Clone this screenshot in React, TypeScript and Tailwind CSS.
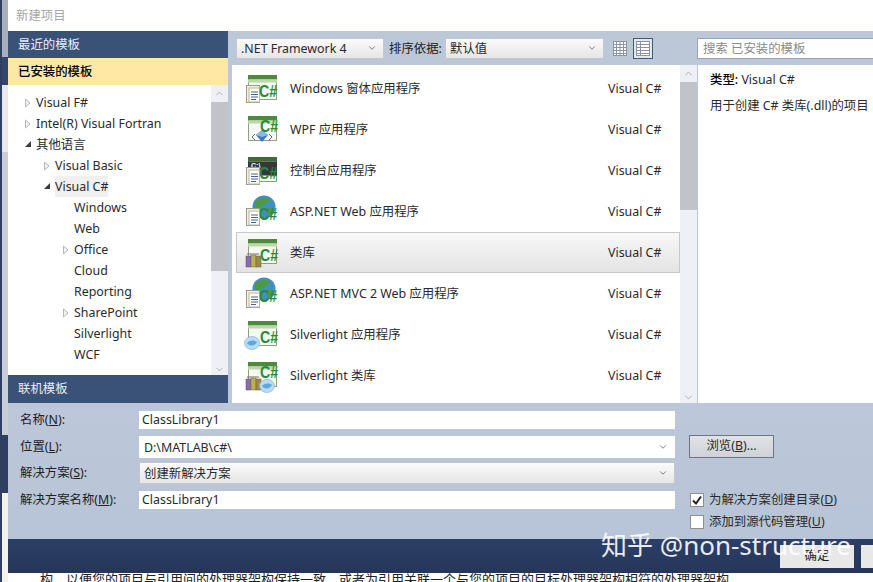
import React from 'react';
import { ChevronDown, ChevronUp } from 'lucide-react';

type IconKind = 'winforms' | 'wpf' | 'console' | 'web' | 'library' | 'mvc' | 'slapp' | 'sllib' | 'plain';

const templates: { name: string; icon: IconKind }[] = [
  { name: 'Windows 窗体应用程序', icon: 'winforms' },
  { name: 'WPF 应用程序', icon: 'wpf' },
  { name: '控制台应用程序', icon: 'console' },
  { name: 'ASP.NET Web 应用程序', icon: 'web' },
  { name: '类库', icon: 'library' },
  { name: 'ASP.NET MVC 2 Web 应用程序', icon: 'mvc' },
  { name: 'Silverlight 应用程序', icon: 'slapp' },
  { name: 'Silverlight 类库', icon: 'sllib' },
  { name: '', icon: 'plain' },
];

const tree: { label: string; level: number; arrow?: 'open' | 'closed'; active?: boolean }[] = [
  { label: 'Visual F#', level: 0, arrow: 'closed' },
  { label: 'Intel(R) Visual Fortran', level: 0, arrow: 'closed' },
  { label: '其他语言', level: 0, arrow: 'open' },
  { label: 'Visual Basic', level: 1, arrow: 'closed' },
  { label: 'Visual C#', level: 1, arrow: 'open', active: true },
  { label: 'Windows', level: 2 },
  { label: 'Web', level: 2 },
  { label: 'Office', level: 2, arrow: 'closed' },
  { label: 'Cloud', level: 2 },
  { label: 'Reporting', level: 2 },
  { label: 'SharePoint', level: 2, arrow: 'closed' },
  { label: 'Silverlight', level: 2 },
  { label: 'WCF', level: 2 },
];

const Doc = () => (
  <g>
    <rect x="1.5" y="13.5" width="13" height="17" fill="#f4f1df" stroke="#9a9a86" />
    <rect x="4" y="16" width="10.5" height="14" fill="#fff" stroke="#b5b5a5" />
    <path d="M6 20h7M6 22.5h7M6 25h7M6 27.5h5" stroke="#46608f" strokeWidth="1" />
  </g>
);

const Books = () => (
  <g>
    <rect x="1" y="20" width="5" height="11" fill="#8a6db0" stroke="#5d4a80" strokeWidth="0.5" />
    <rect x="6" y="19" width="5" height="12" fill="#b8b24a" stroke="#77742c" strokeWidth="0.5" />
    <rect x="11" y="20" width="5" height="11" fill="#9b8a4c" stroke="#6a5e33" strokeWidth="0.5" />
    <path d="M2 19l1-2 1 2 1-2 1 2 1-2 1 2 1-2 1 2 1-2 1 2 1-2 1 2" fill="none" stroke="#777" strokeWidth="0.6" />
  </g>
);

const Globe = () => (
  <g>
    <circle cx="19" cy="12" r="11.5" fill="#3f8fc4" />
    <path d="M11 6c4-3 9-4 13-2 2 2 0 4-3 4-1 3-5 2-6 5-2 1-4-1-5-3z" fill="#4f9a3f" />
    <path d="M22 13c3-1 6 0 7 2-1 3-4 6-7 6z" fill="#4f9a3f" />
  </g>
);

const Blob = ({ x, y }: { x: number; y: number }) => (
  <g transform={`translate(${x} ${y})`}>
    <ellipse cx="7" cy="6" rx="7.5" ry="6.5" fill="#b9dcf2" stroke="#7fb4d8" strokeWidth="0.7" />
    <path d="M2 6c3-3 7-3 10-1-2 4-7 5-10 1z" fill="#5ea9dc" />
  </g>
);

const TemplateIcon = ({ kind }: { kind: IconKind }) => {
  const isWeb = kind === 'web' || kind === 'mvc';
  const isConsole = kind === 'console';
  return (
    <svg width="34" height="34" viewBox="0 0 34 34" className="shrink-0 overflow-visible">
      {!isWeb && (
        <g>
          <rect x="3.5" y="3.5" width="28" height="24" fill="#f6f9f1" stroke="#8f9c86" />
          <rect x="3" y="3" width="29" height="4.5" fill={isConsole ? '#3f6b36' : '#4c8a3c'} />
          <rect x="3" y="7.5" width="29" height={isConsole ? 14 : 3} fill={isConsole ? '#35383a' : '#bcd8a8'} />
        </g>
      )}
      {isConsole && (
        <text x="6" y="14" fontSize="7" fontWeight="700" fill="#fff" fontFamily="Liberation Sans, sans-serif">
          C:\
        </text>
      )}
      {isWeb && <Globe />}
      {(kind === 'winforms' || kind === 'console' || isWeb) && <Doc />}
      {kind === 'wpf' && (
        <g>
          <path d="M10 21l-3 3 3 3M24 21l3 3-3 3" fill="none" stroke="#667" strokeWidth="1" />
          <path d="M17 17l6 5-6 7-6-7z" fill="#3c78c0" />
          <path d="M17 17l6 5-6 2-6-2z" fill="#8cb8e8" />
        </g>
      )}
      {(kind === 'library' || kind === 'sllib') && <Books />}
      {kind === 'slapp' && <Blob x={0} y={19} />}
      {kind === 'sllib' && <Blob x={15} y={21} />}
      {kind !== 'plain' && (
        <text
          x={kind === 'winforms' || isConsole || isWeb ? 14 : 15}
          y={kind === 'wpf' || kind === 'sllib' ? 19 : 25}
          fontSize="17"
          fontWeight="700"
          fill="#2a8a38"
          fontFamily="Liberation Sans, sans-serif"
          textLength="18"
          lengthAdjust="spacingAndGlyphs"
        >
          C#
        </text>
      )}
    </svg>
  );
};

const TreeArrow = ({ type }: { type: 'open' | 'closed' }) =>
  type === 'open' ? (
    <svg width="8" height="8" viewBox="0 0 8 8">
      <path d="M7 1v6H1z" fill="#3a3a3a" />
    </svg>
  ) : (
    <svg width="8" height="10" viewBox="0 0 8 10">
      <path d="M1.5 1l4.5 4-4.5 4z" fill="#f2f2f2" stroke="#b8b8b8" />
    </svg>
  );

const Select = ({ value, className }: { value: string; className: string }) => (
  <div className={`flex shrink-0 items-center justify-between border border-[#c3c8d0] bg-gradient-to-b from-[#fbfbfb] to-[#e6e6e6] pl-1 pr-[6px] ${className}`}>
    <span className="truncate pt-[2px]">{value}</span>
    <ChevronDown size={10} strokeWidth={2} className="shrink-0 text-[#666]" />
  </div>
);

const ScrollBar = ({ thumb }: { thumb: number }) => (
  <div className="flex w-[17px] shrink-0 flex-col items-center justify-between bg-[#eef0f5]">
    <div className="flex w-full flex-col items-center">
      <div className="flex h-[17px] items-center justify-center">
        <ChevronUp size={11} className="text-[#a8a8a8]" />
      </div>
      <div className="w-full bg-[#c2c3c9]" style={{ height: thumb }} />
    </div>
    <ChevronDown size={11} className="text-[#a8a8a8]" />
  </div>
);

const ViewIcon = ({ active }: { active?: boolean }) => (
  <div className={`flex h-[21px] shrink-0 items-center justify-center ${active ? 'w-[20px] border border-[#3a5a80] bg-[#e3e8ef]' : 'w-[16px]'}`}>
    <svg width="14" height="15" viewBox="0 0 14 15">
      <rect x="0.5" y="0.5" width="13" height="14" fill="#fff" stroke="#8a93a3" />
      <path d="M0 3.5h14M0 6.5h14M0 9.5h14M0 12.5h14" stroke="#8a93a3" />
      {active ? <path d="M4.5 0v15" stroke="#8a93a3" /> : <path d="M3.5 0v15M7 0v15M10.5 0v15" stroke="#8a93a3" />}
    </svg>
  </div>
);

const FormRow = ({ label, hotkey, height, mt, children }: { label: string; hotkey: string; height: string; mt: string; children: React.ReactNode }) => (
  <div className={`flex items-center ${height} ${mt}`}>
    <span className="w-[119px] shrink-0 text-[#222]">
      {label}(<span className="underline">{hotkey}</span>):
    </span>
    {children}
  </div>
);

export default function App() {
  return (
    <div className="relative flex h-[582px] w-[873px] overflow-hidden bg-white text-[12.4px] text-[#2a2a2a] [font-family:'Noto_Sans','Noto_Sans_CJK_SC',sans-serif]">
      <div className="flex w-2 shrink-0 flex-col border-l-2 border-[#2e3f60]">
        <div className="h-[57px] bg-[#a9aebd]" />
        <div className="h-[28px] bg-[#33476c]" />
        <div className="h-[67px] bg-[#e6e8ec]" />
        <div className="h-[283px] bg-[#c9cdd8]" />
        <div className="h-[58px] bg-[#2e3f63]" />
        <div className="flex-1 bg-[#f2f2ea]" />
      </div>

      <div className="flex min-w-0 flex-1 flex-col">
        <div className="flex h-[31px] shrink-0 items-center bg-white pl-2 pt-[2px] text-[#a6a6a6]">新建项目</div>

        <div className="flex h-[372px] shrink-0">
          <aside className="flex w-[220px] shrink-0 flex-col">
            <div className="flex h-[27px] shrink-0 items-center bg-[#3a5278] pl-[10px] pt-[2px] text-[#e8edf5]">最近的模板</div>
            <div className="flex h-[27px] shrink-0 items-center bg-[#ffe8a6] pl-[10px] pt-[2px] font-medium text-black">已安装的模板</div>
            <div className="flex min-h-0 flex-1">
              <div className="flex-1 bg-white pt-[7px]">
                {tree.map((t) => (
                  <div key={t.label} className="relative flex h-[21px] items-center" style={{ paddingLeft: 28 + t.level * 19 }}>
                    {t.arrow && (
                      <span className="absolute top-[6px]" style={{ left: 16 + t.level * 19 }}>
                        <TreeArrow type={t.arrow} />
                      </span>
                    )}
                    <span className={`pt-[2px] ${t.active ? 'bg-[#f0f0f0]' : ''}`}>{t.label}</span>
                  </div>
                ))}
              </div>
              <ScrollBar thumb={169} />
            </div>
            <div className="flex h-[28px] shrink-0 items-center bg-[#3a5278] pl-[10px] text-[#e8edf5]">联机模板</div>
          </aside>

          <div className="flex min-w-0 flex-1 flex-col bg-[#bcc7d8]">
            <div className="flex h-[34px] shrink-0 items-center pl-2">
              <Select value=".NET Framework 4" className="h-[21px] w-[148px]" />
              <span className="ml-[5px] w-[56px] shrink-0 whitespace-nowrap pt-[2px] text-[#222]">排序依据:</span>
              <Select value="默认值" className="h-[21px] w-[159px]" />
              <div className="ml-[8px] flex shrink-0 items-center gap-[5px]">
                <ViewIcon />
                <ViewIcon active />
              </div>
              <div className="ml-[44px] flex h-[21px] w-[190px] shrink-0 items-center border border-[#9aa4b4] bg-white pl-[5px] pt-[2px] text-[#8a8a8a]">
                搜索 已安装的模板
              </div>
            </div>
            <div className="flex min-h-0 flex-1">
              <div className="ml-1 h-full w-[448px] shrink-0 overflow-hidden bg-white pt-[3px]">
                {templates.map((t, i) => (
                  <div
                    key={i}
                    className={`ml-1 flex h-[41px] items-center ${t.icon === 'library' ? 'border border-[#c8c8c8] bg-gradient-to-b from-[#f8f8f8] to-[#e4e4e4] pl-[8px]' : 'pl-[9px]'}`}
                  >
                    <TemplateIcon kind={t.icon} />
                    <span className="ml-[11px] w-[318px] shrink-0 whitespace-nowrap pt-[2px]">{t.name}</span>
                    {t.name && <span className="pt-[2px]">Visual C#</span>}
                  </div>
                ))}
              </div>
              <ScrollBar thumb={128} />
              <div className="flex-1 border-l border-[#bcc7d8] bg-white pl-3 pt-[5px]">
                <div className="leading-[20px]">
                  <span className="font-medium text-black">类型:</span> Visual C#
                </div>
                <div className="mt-[6px] whitespace-nowrap leading-[20px]">用于创建 C# 类库(.dll)的项目</div>
              </div>
            </div>
          </div>
        </div>

        <div className="flex h-[136px] shrink-0 bg-gradient-to-b from-[#bcc7d9] to-[#b8c4d7] pl-3 pt-[8px]">
          <div className="w-[655px] shrink-0">
            <FormRow label="名称" hotkey="N" height="h-[18px]" mt="">
              <div className="flex h-full w-[536px] items-center bg-white pl-[3px]">ClassLibrary1</div>
            </FormRow>
            <FormRow label="位置" hotkey="L" height="h-[22px]" mt="mt-[7px]">
              <Select value="D:\MATLAB\c#\" className="h-full w-[536px] border-transparent !bg-none bg-white" />
            </FormRow>
            <FormRow label="解决方案" hotkey="S" height="h-[22px]" mt="mt-1">
              <Select value="创建新解决方案" className="h-full w-[536px]" />
            </FormRow>
            <FormRow label="解决方案名称" hotkey="M" height="h-[18px]" mt="mt-[7px]">
              <div className="flex h-full w-[536px] items-center bg-white pl-[3px]">ClassLibrary1</div>
            </FormRow>
          </div>
          <div className="pl-[14px]">
            <div className="mt-[24px] flex h-[23px] w-[85px] items-center justify-center border border-[#6f7680] bg-gradient-to-b from-[#dfe2e6] to-[#cfd3d9]">
              浏览(<span className="underline">B</span>)...
            </div>
            <label className="mt-[35px] flex h-[14px] items-center whitespace-nowrap pl-px">
              <span className="mr-[5px] flex h-[14px] w-[14px] items-center justify-center border border-[#8e8f8f] bg-white">
                <svg width="12" height="12" viewBox="0 0 12 12">
                  <path d="M2 6.5l3 3 5-7" fill="none" stroke="#222" strokeWidth="2" />
                </svg>
              </span>
              为解决方案创建目录(<span className="underline">D</span>)
            </label>
            <label className="mt-[8px] flex h-[14px] items-center whitespace-nowrap pl-px">
              <span className="mr-[5px] h-[14px] w-[14px] border border-[#8e8f8f] bg-white" />
              添加到源代码管理(<span className="underline">U</span>)
            </label>
          </div>
        </div>

        <div className="flex h-[34px] shrink-0 items-center gap-[7px] bg-gradient-to-b from-[#2c3f66] to-[#25365a] pl-[772px]">
          <div className="flex h-[23px] w-[74px] shrink-0 items-center justify-center bg-[#e8e8e8] text-[#222]">确定</div>
          <div className="h-[23px] w-[74px] shrink-0 bg-[#e8e8e8]" />
        </div>

        <div className="flex-1 overflow-hidden whitespace-nowrap pl-8 text-[13px] leading-[13px] text-[#222]">
          构，以便您的项目与引用间的处理器架构保持一致，或者为引用关联一个与您的项目的目标处理器架构相符的处理器架构
        </div>
      </div>

      <div className="absolute left-[601px] top-[527px] whitespace-nowrap text-[26px] leading-[36px] text-white/90">
        知乎 @non-structure
      </div>
    </div>
  );
}
